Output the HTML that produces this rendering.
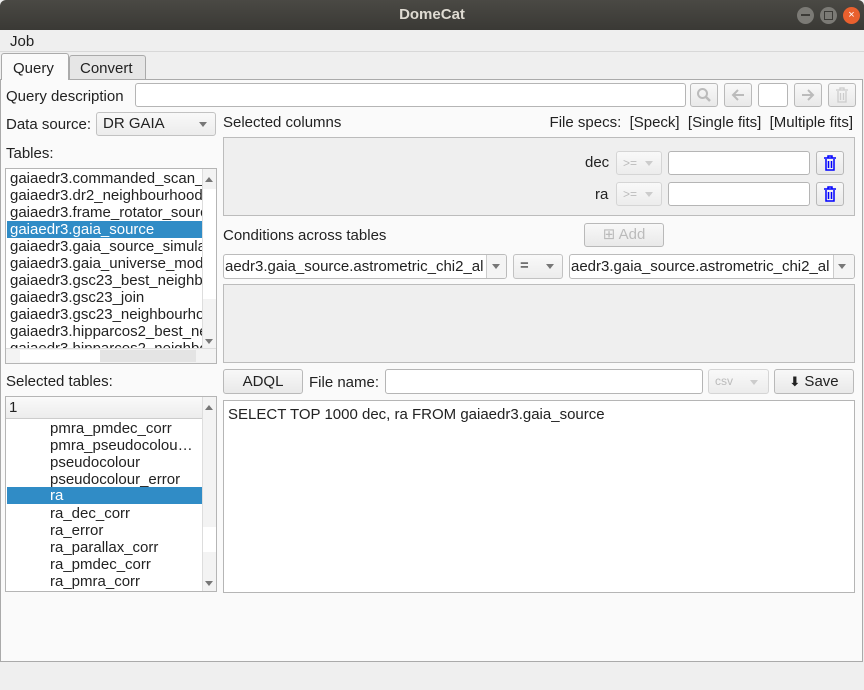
<!DOCTYPE html>
<html><head><meta charset="utf-8"><style>
*{box-sizing:border-box;margin:0;padding:0}
body{width:864px;height:690px;background:#efefef;font-family:"Liberation Sans","DejaVu Sans",sans-serif;font-size:15px;color:#222;position:relative;overflow:hidden}
.a{position:absolute;white-space:nowrap}
.btn{position:absolute;border:1px solid #b9b9b9;border-radius:3px;background:linear-gradient(#f8f8f8,#e9e9e9);text-align:center}
.inp{position:absolute;border:1px solid #b5b5b5;border-radius:3px;background:#fff}
.dis{color:#bbb}
.combo{position:absolute;border:1px solid #c2c2c2;border-radius:3px;background:linear-gradient(#f9f9f9,#ececec);padding-left:6px;line-height:22px}
.arr{position:absolute;width:0;height:0;border-left:4px solid transparent;border-right:4px solid transparent;border-top:5px solid #777}
.row{position:absolute;left:1px;height:17px;line-height:17px;padding-left:3px;width:196px;overflow:hidden}
.sel{background:#308cc6;color:#fff}
</style></head><body>
<div class="a" style="left:0;top:0;width:864px;height:30px;background:linear-gradient(#4a4944,#3a3935);border-radius:6px 6px 0 0"></div>
<div class="a" style="left:0;top:6px;width:864px;text-align:center;color:#dfdbd2;font-weight:bold;font-size:15px">DomeCat</div>
<div class="a" style="left:797px;top:7px;width:17px;height:17px;border-radius:50%;background:#7b7a75"></div>
<div class="a" style="left:820px;top:7px;width:17px;height:17px;border-radius:50%;background:#7b7a75"></div>
<div class="a" style="left:843px;top:7px;width:17px;height:17px;border-radius:50%;background:#e9602e;color:#fff;font-size:11px;text-align:center;line-height:17px">×</div>
<div class="a" style="left:801px;top:14px;width:9px;height:2px;background:#3c3b37"></div>
<div class="a" style="left:824px;top:11px;width:9px;height:9px;border:1px solid #3c3b37"></div>
<div class="a" style="left:10px;top:33px">Job</div>
<div class="a" style="left:0;top:51px;width:864px;height:1px;background:#d8d8d8"></div>
<div class="a" style="left:0;top:79px;width:863px;height:583px;background:#fafafa;border:1px solid #aaa"></div>
<div class="a" style="left:1px;top:53px;width:68px;height:27px;background:#fafafa;border:1px solid #aaa;border-bottom:none;border-radius:3px 3px 0 0"></div>
<div class="a" style="left:13px;top:60px">Query</div>
<div class="a" style="left:69px;top:55px;width:77px;height:24px;background:#e6e6e6;border:1px solid #aaa;border-bottom:none;border-radius:3px 3px 0 0"></div>
<div class="a" style="left:80px;top:60px">Convert</div>

<div class="a" style="left:6px;top:88px">Query description</div>
<div class="inp" style="left:135px;top:83px;width:551px;height:24px"></div>
<div class="btn" style="left:690px;top:83px;width:28px;height:24px"><svg width="16" height="16" style="margin-top:3px" viewBox="0 0 16 16"><circle cx="6.5" cy="6.5" r="4.5" fill="none" stroke="#bbb" stroke-width="2"/><path d="M10 10l4 4" stroke="#bbb" stroke-width="2.5"/></svg></div>
<div class="btn" style="left:724px;top:83px;width:28px;height:24px"><svg width="16" height="16" style="margin-top:3px" viewBox="0 0 16 16"><path d="M14 8H3M8 3L3 8l5 5" fill="none" stroke="#bbb" stroke-width="2"/></svg></div>
<div class="inp" style="left:758px;top:83px;width:30px;height:24px"></div>
<div class="btn" style="left:794px;top:83px;width:28px;height:24px"><svg width="16" height="16" style="margin-top:3px" viewBox="0 0 16 16"><path d="M2 8h11M8 3l5 5-5 5" fill="none" stroke="#bbb" stroke-width="2"/></svg></div>
<div class="btn" style="left:828px;top:83px;width:28px;height:24px"><svg width="14" height="16" style="margin-top:3px" viewBox="0 0 14 16"><path d="M1 3h12M5 3V1h4v2M3 4v11h8V4M5.5 6v7M8.5 6v7" fill="none" stroke="#ccc" stroke-width="1.3"/></svg></div>

<div class="a" style="left:6px;top:116px">Data source:</div>
<div class="combo" style="left:96px;top:112px;width:120px;height:24px">DR GAIA</div>
<div class="arr" style="left:199px;top:122px"></div>

<div class="a" style="left:223px;top:114px">Selected columns</div>
<div class="a" style="right:11px;top:114px">File specs:&nbsp; [Speck]&nbsp; [Single fits]&nbsp; [Multiple fits]</div>
<div class="a" style="left:223px;top:137px;width:632px;height:79px;background:#efefef;border:1px solid #bcbcbc"></div>
<div class="a" style="left:585px;top:154px">dec</div>
<div class="combo dis" style="left:616px;top:151px;width:46px;height:24px;font-size:12px;border-color:#d5d5d5">&gt;=</div><div class="arr" style="left:645px;top:161px;border-top-color:#ccc"></div>
<div class="inp" style="left:668px;top:151px;width:142px;height:24px"></div>
<div class="btn" style="left:816px;top:151px;width:28px;height:24px"><svg width="14" height="16" style="margin-top:3px" viewBox="0 0 14 16"><path d="M1 3h12M5 3V1h4v2M3 4v11h8V4M5.5 6v7M8.5 6v7" fill="none" stroke="#00f" stroke-width="1.5"/></svg></div>
<div class="a" style="left:595px;top:186px">ra</div>
<div class="combo dis" style="left:616px;top:182px;width:46px;height:24px;font-size:12px;border-color:#d5d5d5">&gt;=</div><div class="arr" style="left:645px;top:192px;border-top-color:#ccc"></div>
<div class="inp" style="left:668px;top:182px;width:142px;height:24px"></div>
<div class="btn" style="left:816px;top:182px;width:28px;height:24px"><svg width="14" height="16" style="margin-top:3px" viewBox="0 0 14 16"><path d="M1 3h12M5 3V1h4v2M3 4v11h8V4M5.5 6v7M8.5 6v7" fill="none" stroke="#00f" stroke-width="1.5"/></svg></div>

<div class="a" style="left:223px;top:227px">Conditions across tables</div>
<div class="btn dis" style="left:584px;top:223px;width:80px;height:24px;line-height:22px">⊞ Add</div>

<div class="inp" style="left:223px;top:254px;width:284px;height:25px;overflow:hidden;line-height:23px;border-color:#bbb"><span style="position:absolute;left:1px">aedr3.gaia_source.astrometric_chi2_al</span><div style="position:absolute;left:262px;top:0;width:21px;height:23px;border-left:1px solid #ccc;background:#f4f4f4"></div></div>
<div class="arr" style="left:492px;top:264px"></div>
<div class="combo" style="left:513px;top:254px;width:50px;height:25px">=</div><div class="arr" style="left:546px;top:264px"></div>
<div class="inp" style="left:569px;top:254px;width:286px;height:25px;overflow:hidden;line-height:23px;border-color:#bbb"><span style="position:absolute;left:1px">aedr3.gaia_source.astrometric_chi2_al</span><div style="position:absolute;left:263px;top:0;width:22px;height:23px;border-left:1px solid #ccc;background:#f4f4f4"></div></div>
<div class="arr" style="left:838px;top:264px"></div>
<div class="a" style="left:223px;top:284px;width:632px;height:79px;background:#efefef;border:1px solid #bcbcbc"></div>

<div class="a" style="left:6px;top:145px">Tables:</div>
<div class="a" style="left:5px;top:168px;width:212px;height:196px;background:#fff;border:1px solid #b5b5b5;overflow:hidden">
<div class="row" style="top:1px">gaiaedr3.commanded_scan_law</div>
<div class="row" style="top:18px">gaiaedr3.dr2_neighbourhood</div>
<div class="row" style="top:35px">gaiaedr3.frame_rotator_source</div>
<div class="row sel" style="top:52px">gaiaedr3.gaia_source</div>
<div class="row" style="top:69px">gaiaedr3.gaia_source_simulation</div>
<div class="row" style="top:86px">gaiaedr3.gaia_universe_model</div>
<div class="row" style="top:103px">gaiaedr3.gsc23_best_neighbour</div>
<div class="row" style="top:120px">gaiaedr3.gsc23_join</div>
<div class="row" style="top:137px">gaiaedr3.gsc23_neighbourhood</div>
<div class="row" style="top:154px">gaiaedr3.hipparcos2_best_neighbour</div>
<div class="row" style="top:171px">gaiaedr3.hipparcos2_neighbourhood</div>
<div class="a" style="left:196px;top:0;width:14px;height:180px;background:#f3f3f3;border-left:1px solid #ddd"></div>
<div class="a" style="left:197px;top:20px;width:13px;height:110px;background:#fff"></div>
<div class="a" style="left:0;top:179px;width:210px;height:15px;background:#f3f3f3;border-top:1px solid #ddd"></div>
<div class="a" style="left:14px;top:181px;width:80px;height:12px;background:#fff"></div>
<div class="a" style="left:94px;top:181px;width:96px;height:12px;background:#e4e4e4"></div>
<div class="arr" style="left:199px;top:8px;border-top:none;border-bottom:5px solid #777"></div>
<div class="arr" style="left:199px;top:170px"></div>
</div>

<div class="a" style="left:6px;top:373px">Selected tables:</div>
<div class="a" style="left:5px;top:396px;width:212px;height:196px;background:#fff;border:1px solid #b5b5b5;overflow:hidden">
<div class="a" style="left:0;top:0;width:196px;height:22px;background:linear-gradient(#fafafa,#ececec);border-bottom:1px solid #ccc;padding-left:3px;line-height:22px">1</div>
<div class="row" style="top:23px;padding-left:43px">pmra_pmdec_corr</div>
<div class="row" style="top:40px;padding-left:43px">pmra_pseudocolou…</div>
<div class="row" style="top:57px;padding-left:43px">pseudocolour</div>
<div class="row" style="top:74px;padding-left:43px">pseudocolour_error</div>
<div class="row sel" style="top:90px;padding-left:43px">ra</div>
<div class="row" style="top:108px;padding-left:43px">ra_dec_corr</div>
<div class="row" style="top:125px;padding-left:43px">ra_error</div>
<div class="row" style="top:142px;padding-left:43px">ra_parallax_corr</div>
<div class="row" style="top:159px;padding-left:43px">ra_pmdec_corr</div>
<div class="row" style="top:176px;padding-left:43px">ra_pmra_corr</div>
<div class="a" style="left:196px;top:0;width:14px;height:194px;background:#f3f3f3;border-left:1px solid #ddd"></div>
<div class="a" style="left:197px;top:130px;width:13px;height:25px;background:#fff"></div>
<div class="arr" style="left:199px;top:8px;border-top:none;border-bottom:5px solid #777"></div>
<div class="arr" style="left:199px;top:184px"></div>
</div>

<div class="btn" style="left:223px;top:369px;width:80px;height:25px;line-height:23px">ADQL</div>
<div class="a" style="left:309px;top:374px">File name:</div>
<div class="inp" style="left:385px;top:369px;width:318px;height:25px"></div>
<div class="combo dis" style="left:708px;top:369px;width:61px;height:25px;font-size:12px;border-color:#d5d5d5">csv</div><div class="arr" style="left:750px;top:380px;border-top-color:#ccc"></div>
<div class="btn" style="left:774px;top:369px;width:80px;height:25px;line-height:23px"><b style="font-size:13px">⬇</b> Save</div>

<div class="a" style="left:223px;top:400px;width:632px;height:193px;background:#fff;border:1px solid #b5b5b5"></div>
<div class="a" style="left:228px;top:406px">SELECT TOP 1000 dec, ra FROM gaiaedr3.gaia_source</div>
</body></html>
